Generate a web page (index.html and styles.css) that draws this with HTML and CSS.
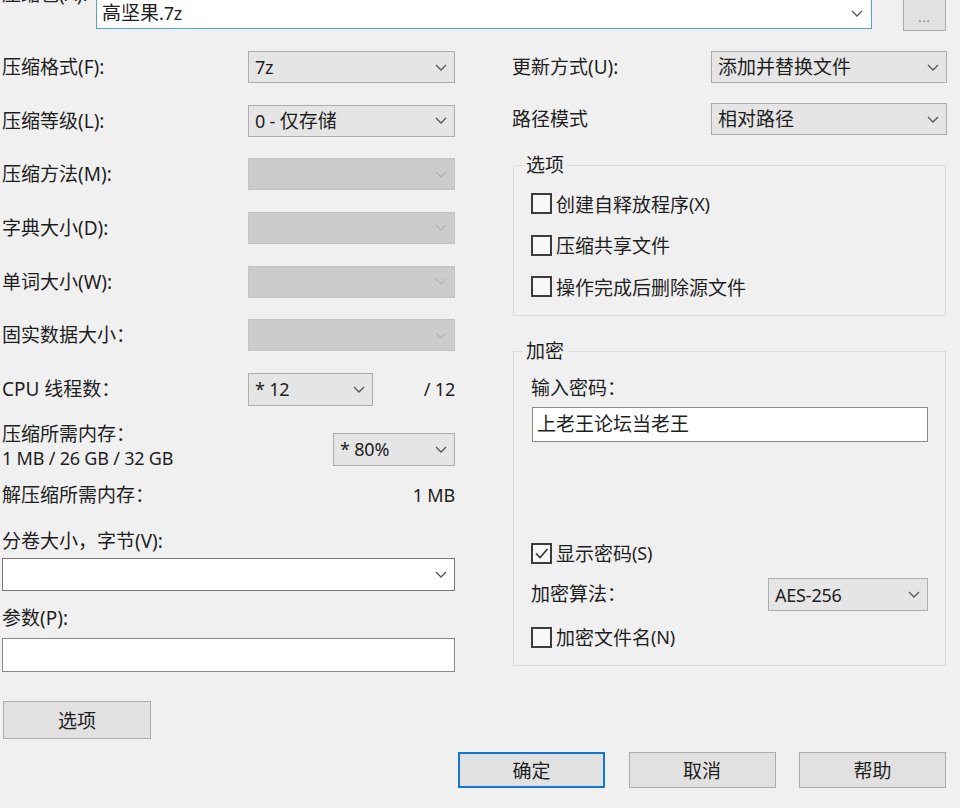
FILE: index.html
```html
<!DOCTYPE html>
<html lang="zh-CN">
<head>
<meta charset="utf-8">
<title>添加到压缩包</title>
<link rel="stylesheet" href="styles.css">
</head>
<body>
<div class="dialog">
  <div class="archive-row">
    <span class="archive-label">压缩包(A):</span>
    <div class="combo edit focus archive-name">
      <span class="value">高坚果<span class="num">.7z</span></span>
      <svg class="chev" viewBox="0 0 12 7" width="12" height="7"><path d="M1 1 L6 6 L11 1" fill="none" stroke="currentColor" stroke-width="1.3"/></svg>
    </div>
    <button class="btn browse">...</button>
  </div>

  <div class="main">
    <div class="col-left">
      <div class="field step">
        <span class="label">压缩格式(F):</span>
        <div class="combo w207"><span class="value num">7z</span><svg class="chev" viewBox="0 0 12 7" width="12" height="7"><path d="M1 1 L6 6 L11 1" fill="none" stroke="currentColor" stroke-width="1.3"/></svg></div>
      </div>
      <div class="field step">
        <span class="label">压缩等级(L):</span>
        <div class="combo w207"><span class="value"><span class="num">0 - </span>仅存储</span><svg class="chev" viewBox="0 0 12 7" width="12" height="7"><path d="M1 1 L6 6 L11 1" fill="none" stroke="currentColor" stroke-width="1.3"/></svg></div>
      </div>
      <div class="field step">
        <span class="label">压缩方法(M):</span>
        <div class="combo disabled w207"><span class="value"></span><svg class="chev" viewBox="0 0 12 7" width="12" height="7"><path d="M1 1 L6 6 L11 1" fill="none" stroke="currentColor" stroke-width="1.3"/></svg></div>
      </div>
      <div class="field step">
        <span class="label">字典大小(D):</span>
        <div class="combo disabled w207"><span class="value"></span><svg class="chev" viewBox="0 0 12 7" width="12" height="7"><path d="M1 1 L6 6 L11 1" fill="none" stroke="currentColor" stroke-width="1.3"/></svg></div>
      </div>
      <div class="field step">
        <span class="label">单词大小(W):</span>
        <div class="combo disabled w207"><span class="value"></span><svg class="chev" viewBox="0 0 12 7" width="12" height="7"><path d="M1 1 L6 6 L11 1" fill="none" stroke="currentColor" stroke-width="1.3"/></svg></div>
      </div>
      <div class="field step">
        <span class="label">固实数据大小：</span>
        <div class="combo disabled w207"><span class="value"></span><svg class="chev" viewBox="0 0 12 7" width="12" height="7"><path d="M1 1 L6 6 L11 1" fill="none" stroke="currentColor" stroke-width="1.3"/></svg></div>
      </div>

      <div class="cpu-row">
        <span class="label">CPU 线程数：</span>
        <div class="combo cpu-combo"><span class="value num">* 12</span><svg class="chev" viewBox="0 0 12 7" width="12" height="7"><path d="M1 1 L6 6 L11 1" fill="none" stroke="currentColor" stroke-width="1.3"/></svg></div>
        <span class="total num">/ 12</span>
      </div>

      <div class="mem-row">
        <div class="mem-label">
          <span>压缩所需内存：</span>
          <span class="num">1 MB / 26 GB / 32 GB</span>
        </div>
        <div class="combo mem-combo"><span class="value num">* 80%</span><svg class="chev" viewBox="0 0 12 7" width="12" height="7"><path d="M1 1 L6 6 L11 1" fill="none" stroke="currentColor" stroke-width="1.3"/></svg></div>
      </div>

      <div class="unpack-row">
        <span>解压缩所需内存：</span>
        <span class="num">1 MB</span>
      </div>

      <span class="caption volume-caption">分卷大小，字节(V):</span>
      <div class="combo edit volume-combo"><span class="value"></span><svg class="chev" viewBox="0 0 12 7" width="12" height="7"><path d="M1 1 L6 6 L11 1" fill="none" stroke="currentColor" stroke-width="1.3"/></svg></div>

      <span class="caption params-caption">参数(P):</span>
      <div class="textbox params-box"></div>

      <button class="btn options-btn">选项</button>
    </div>

    <div class="col-right">
      <div class="field update-row">
        <span class="label">更新方式(U):</span>
        <div class="combo w236"><span class="value">添加并替换文件</span><svg class="chev" viewBox="0 0 12 7" width="12" height="7"><path d="M1 1 L6 6 L11 1" fill="none" stroke="currentColor" stroke-width="1.3"/></svg></div>
      </div>
      <div class="field path-row">
        <span class="label">路径模式</span>
        <div class="combo w236"><span class="value">相对路径</span><svg class="chev" viewBox="0 0 12 7" width="12" height="7"><path d="M1 1 L6 6 L11 1" fill="none" stroke="currentColor" stroke-width="1.3"/></svg></div>
      </div>

      <fieldset class="group options-group">
        <legend>选项</legend>
        <label class="check"><span class="box"></span>创建自释放程序<span class="num">(X)</span></label>
        <label class="check"><span class="box"></span>压缩共享文件</label>
        <label class="check"><span class="box"></span>操作完成后删除源文件</label>
      </fieldset>

      <fieldset class="group crypt-group">
        <legend>加密</legend>
        <span class="caption pass-caption">输入密码：</span>
        <div class="textbox pass-box">上老王论坛当老王</div>
        <label class="check show-pass"><span class="box checked"><svg viewBox="0 0 17 17" width="17" height="17"><path d="M3 8.5 L7 12.5 L14.5 4" fill="none" stroke="#333" stroke-width="1.6"/></svg></span>显示密码<span class="num">(S)</span></label>
        <div class="field algo-row">
          <span class="label">加密算法：</span>
          <div class="combo w160"><span class="value num">AES-256</span><svg class="chev" viewBox="0 0 12 7" width="12" height="7"><path d="M1 1 L6 6 L11 1" fill="none" stroke="currentColor" stroke-width="1.3"/></svg></div>
        </div>
        <label class="check names-check"><span class="box"></span>加密文件名<span class="num">(N)</span></label>
      </fieldset>
    </div>
  </div>

  <div class="footer">
    <button class="btn action default">确定</button>
    <button class="btn action">取消</button>
    <button class="btn action">帮助</button>
  </div>
</div>
</body>
</html>
```

FILE: styles.css
```css
* {
  box-sizing: border-box;
}

html,
body {
  margin: 0;
  height: 100%;
}

body {
  background: #f0f0f0;
  color: #1e1e1e;
  font-family: "Noto Sans", "Noto Sans CJK SC", sans-serif;
  font-size: 19px;
  overflow: hidden;
}

/* Latin runs are set a little smaller, as the UI font does */
.num {
  font-size: 18px;
  letter-spacing: -0.2px;
}

/* push buttons */
.btn {
  font: inherit;
  color: #1e1e1e;
  background: #e1e1e1;
  border: 1px solid #adadad;
  border-radius: 0;
  padding: 0;
  margin: 0;
}

.dialog {
  margin-top: -20px;
}

/* archive name row */
.archive-row {
  display: flex;
  align-items: flex-start;
  height: 71px;
  padding-left: 2px;
}

.archive-label {
  width: 94px;
  line-height: 28px;
  white-space: nowrap;
}

.archive-name {
  margin-top: 17px;
  width: 776px;
  height: 33px;
}

.browse {
  margin-left: 31px;
  margin-top: 18px;
  width: 43px;
  height: 33px;
  font-size: 12px;
  color: #777;
  padding-top: 6px;
  letter-spacing: 1px;
}

/* two columns of settings */
.main {
  display: grid;
  grid-template-columns: 453px 435px;
  column-gap: 57px;
  padding-left: 2px;
  height: 688px;
}

.col-left,
.col-right {
  display: flex;
  flex-direction: column;
  align-items: stretch;
}

.field {
  display: flex;
  justify-content: space-between;
  align-items: flex-start;
}

.field .label {
  line-height: 32px;
  white-space: nowrap;
}

.step {
  height: 53.67px;
  flex: none;
}

/* combo boxes */
.combo {
  display: flex;
  align-items: center;
  justify-content: space-between;
  height: 32px;
  padding: 0 7px 0 6px;
  background: #e5e5e5;
  border: 1px solid #adadad;
  flex: none;
  white-space: nowrap;
}

.combo .value {
  line-height: 30px;
}

.combo .chev {
  color: #555;
  flex: none;
}

.combo.disabled {
  background: #cccccc;
  border-color: #c3c3c3;
}

.combo.disabled .chev {
  color: #b4b4b4;
}

.combo.edit {
  background: #fff;
  border-color: #7a7a7a;
}

.combo.focus {
  border-color: #5a9fd8;
  padding-left: 5px;
  padding-right: 8px;
}

.w207 {
  width: 207px;
}

.w236 {
  width: 236px;
}

.w160 {
  width: 160px;
}

/* threads */
.cpu-row {
  display: grid;
  grid-template-columns: 246px 125px 1fr;
  align-items: center;
  height: 49px;
  align-content: start;
  flex: none;
}

.cpu-row .label {
  line-height: 33px;
}

.cpu-combo {
  height: 33px;
}

.total {
  text-align: right;
}

/* memory */
.mem-row {
  display: flex;
  justify-content: space-between;
  align-items: flex-start;
  height: 48px;
  flex: none;
}

.mem-label {
  display: flex;
  flex-direction: column;
  line-height: 24px;
}

.mem-combo {
  width: 122px;
  height: 33px;
  margin-top: 11px;
}

.unpack-row {
  display: flex;
  justify-content: space-between;
  line-height: 50px;
  height: 50px;
  flex: none;
}

.caption {
  line-height: 24px;
  white-space: nowrap;
}

.volume-caption {
  margin-top: 9px;
}

.volume-combo {
  margin-top: 5px;
  height: 33px;
  width: 453px;
}

.params-caption {
  margin-top: 15px;
}

.textbox {
  background: #fff;
  border: 1px solid #8a8a8a;
  line-height: 33px;
  padding-left: 4px;
}

.params-box {
  margin-top: 8px;
  height: 34px;
}

.options-btn {
  margin-top: 29px;
  margin-left: 1px;
  width: 148px;
  height: 38px;
  align-self: flex-start;
}

/* right column */
.update-row {
  height: 52px;
  flex: none;
}

.path-row {
  height: 32px;
  flex: none;
}

.group {
  margin: 0 1px;
  padding: 6px 17px 0 17px;
  border: 1px solid #dcdcdc;
  min-width: 0;
  display: flex;
  flex-direction: column;
}

.group legend {
  padding: 0 3px;
  margin-left: -8px;
  line-height: 24px;
}

.options-group {
  margin-top: 18px;
  padding-bottom: 7.5px;
}

.crypt-group {
  margin-top: 23px;
  padding-bottom: 7.25px;
}

.check {
  display: flex;
  align-items: center;
  height: 41.5px;
  white-space: nowrap;
  flex: none;
}

.box {
  display: flex;
  align-items: center;
  justify-content: center;
  width: 21px;
  height: 21px;
  margin-right: 4px;
  border: 2px solid #3c3c3c;
  background: #f8f8f8;
  flex: none;
}

.pass-caption {
  margin-top: 7px;
}

.pass-box {
  margin-top: 7px;
  margin-left: 1px;
  height: 35px;
  width: 396px;
}

.show-pass {
  margin-top: 90.25px;
}

.algo-row {
  margin-top: 4.25px;
  height: 33px;
  flex: none;
}

.algo-row .label {
  line-height: 33px;
}

.algo-row .combo {
  height: 33px;
}

.names-check {
  margin-top: 5.25px;
}

/* dialog buttons */
.footer {
  display: flex;
  justify-content: flex-end;
  gap: 23.5px;
  padding-right: 14px;
  margin-top: 13px;
}

.action {
  width: 147px;
  height: 36px;
}

.action.default {
  border: 2px solid #0f78d4;
}
```
